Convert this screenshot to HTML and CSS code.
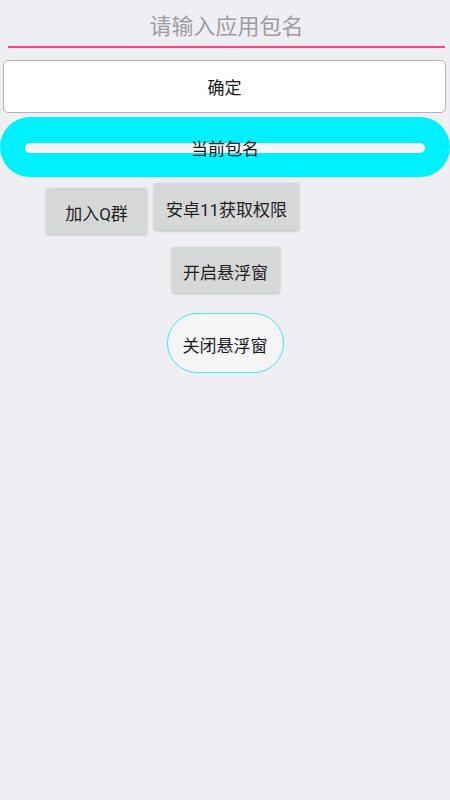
FILE: index.html
```html
<!DOCTYPE html>
<html>
<head>
    <meta charset="utf-8">
    <link rel="stylesheet" href="styles.css">
</head>
<body>
    <div class="page">
        <div class="field">
            <input type="text" class="pkg-input" placeholder="请输入应用包名">
        </div>
        <button class="ok-button">确定</button>
        <div class="current">
            <div class="current-bar"></div>
            <span class="current-label">当前包名</span>
        </div>
        <div class="row">
            <button class="gray-button join">加入Q群</button>
            <button class="gray-button perm">安卓11获取权限</button>
        </div>
        <div class="center">
            <button class="gray-button open">开启悬浮窗</button>
        </div>
        <div class="center">
            <button class="close-button">关闭悬浮窗</button>
        </div>
    </div>
</body>
</html>
```

FILE: styles.css
```css
body {
    margin: 0;
    padding: 0;
    background-color: #efeef3;
    font-family: Roboto, "Noto Sans CJK SC", sans-serif;
    color: #1a1a1a;
}

.page {
    width: 450px;
    height: 800px;
    padding-top: 8px;
    box-sizing: border-box;
}

.field {
    margin: 0 5px 0 8px;
    border-bottom: 2px solid #ff3f80;
}

.pkg-input {
    display: block;
    width: 100%;
    height: 38px;
    padding: 0 0 2px 0;
    border: none;
    background: transparent;
    font-family: inherit;
    font-size: 22px;
    text-align: center;
    outline: none;
    box-sizing: border-box;
}

.pkg-input::placeholder {
    color: #9d9d9f;
}

.ok-button {
    display: block;
    width: 443px;
    height: 53px;
    margin: 12px 0 0 3px;
    background-color: #fff;
    border: 1px solid #b3b3b6;
    border-radius: 5px;
    font-family: inherit;
    font-size: 17px;
    color: #1a1a1a;
    padding: 0;
}

.current {
    position: relative;
    height: 60px;
    margin-top: 4px;
    background-color: #00f0ff;
    border-radius: 30px;
    display: flex;
    align-items: center;
    justify-content: center;
}

.current-bar {
    position: absolute;
    left: 25px;
    right: 25px;
    top: 26px;
    height: 10px;
    border-radius: 5px;
    background-color: #f5f5f8;
}

.current-label {
    position: relative;
    font-size: 17px;
}

.row {
    display: flex;
    align-items: flex-start;
    gap: 7px;
    padding-left: 46px;
    margin-top: 6px;
}

.gray-button {
    height: 46px;
    padding: 3px 0 0 0;
    background-color: #d6d7d7;
    border: none;
    border-radius: 3px;
    box-shadow: 0 1px 3px rgba(0, 0, 0, 0.22);
    font-family: inherit;
    font-size: 17px;
    color: #1f1f1f;
}

.gray-button.join {
    width: 101px;
    margin-top: 5px;
}

.gray-button.perm {
    width: 145px;
    height: 47px;
}

.center {
    display: flex;
    justify-content: center;
}

.gray-button.open {
    width: 108px;
    margin-top: 13px;
    margin-left: 1px;
}

.close-button {
    width: 117px;
    height: 60px;
    margin-top: 20px;
    padding: 2px 0 0 0;
    background-color: #f5f5f8;
    border: 1px solid #3ee8f8;
    border-radius: 30px;
    font-family: inherit;
    font-size: 17px;
    color: #1a1a1a;
}
```
